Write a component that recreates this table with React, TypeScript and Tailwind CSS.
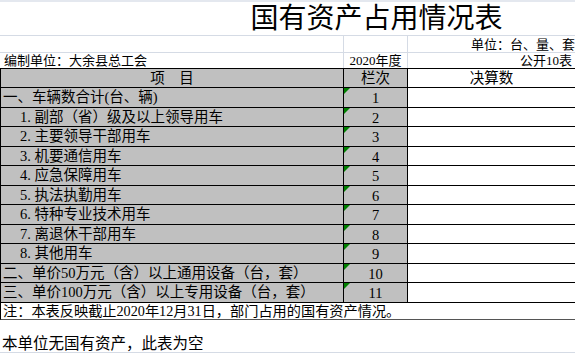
const rows: { label: string; indent?: boolean; h: string }[] = [
  { label: "一、车辆数合计(台、辆)", h: "h-[20px]" },
  { label: "1. 副部（省）级及以上领导用车", indent: true, h: "h-[19px]" },
  { label: "2. 主要领导干部用车", indent: true, h: "h-[20px]" },
  { label: "3. 机要通信用车", indent: true, h: "h-[19px]" },
  { label: "4. 应急保障用车", indent: true, h: "h-[20px]" },
  { label: "5. 执法执勤用车", indent: true, h: "h-[19px]" },
  { label: "6. 特种专业技术用车", indent: true, h: "h-[20px]" },
  { label: "7. 离退休干部用车", indent: true, h: "h-[19px]" },
  { label: "8. 其他用车", indent: true, h: "h-[20px]" },
  { label: "二、单价50万元（含）以上通用设备（台，套）", h: "h-[19px]" },
  { label: "三、单价100万元（含）以上专用设备（台，套）", h: "h-[20px]" },
];

export default function App() {
  return (
    <div
      className="w-[575px] h-[354px] overflow-hidden bg-white text-black"
      style={{ fontFamily: '"Liberation Serif", "Noto Sans CJK SC", serif' }}
    >
      <div className="h-[2px] bg-[#e4e8ef]" />
      {/* title */}
      <div className="h-[34px] border-b border-[#d5dbe5] flex justify-center items-end pl-[178px]">
        <span className="text-[28px] leading-[32px]">国有资产占用情况表</span>
      </div>

      {/* unit line */}
      <div className="grid grid-cols-[344px_64px_1fr] h-[17px] border-b border-[#d5dbe5] text-[13px] leading-none">
        <div className="border-r border-[#d5dbe5]" />
        <div className="border-r border-[#d5dbe5]" />
        <div className="flex items-center justify-end whitespace-nowrap">单位：台、量、套</div>
      </div>

      {/* compiled by */}
      <div className="grid grid-cols-[344px_64px_1fr] h-[16px] border-b border-black text-[13px] leading-none">
        <div className="border-r border-[#d5dbe5] flex items-end pb-px pl-[4px] whitespace-nowrap">编制单位：大余县总工会</div>
        <div className="border-r border-[#d5dbe5] flex items-end pb-px justify-center whitespace-nowrap">2020年度</div>
        <div className="flex items-end pb-px justify-end pr-[3px] whitespace-nowrap">公开10表</div>
      </div>

      {/* header */}
      <div className="grid grid-cols-[344px_64px_1fr] h-[19px] border-b border-black text-[14.5px] leading-none">
        <div className="bg-[#c0c0c0] border-l border-r border-black flex items-center justify-center">项　目</div>
        <div className="bg-[#c0c0c0] border-r border-black flex items-center justify-center">栏次</div>
        <div className="flex items-center justify-center">决算数</div>
      </div>

      {rows.map((r, i) => (
        <div
          key={i}
          className={`grid grid-cols-[344px_64px_1fr] ${r.h} border-b border-black text-[14.5px] leading-none`}
        >
          <div
            className={`bg-[#c0c0c0] border-l border-r border-black flex items-center whitespace-nowrap ${
              r.indent ? "pl-[19px]" : "pl-[2px]"
            }`}
          >
            {r.label}
          </div>
          <div className="relative bg-[#c0c0c0] border-r border-black flex items-center justify-center pt-[2px]">
            <svg className="absolute left-0 top-0" width="6" height="6" viewBox="0 0 6 6">
              <polygon points="0,0 6,0 0,6" fill="#008000" />
            </svg>
            {i + 1}
          </div>
          <div />
        </div>
      ))}

      {/* note */}
      <div className="h-[17px] border-l border-b border-black border-b-[#555] flex items-center pl-[2px] text-[14.2px] leading-none whitespace-nowrap">
        注：本表反映截止2020年12月31日，部门占用的国有资产情况。
      </div>

      <div className="h-[33px] border-b border-[#d5dbe5] flex items-end pl-[2px] text-[15.5px] leading-[16px] whitespace-nowrap">
        本单位无国有资产，此表为空
      </div>
    </div>
  );
}
